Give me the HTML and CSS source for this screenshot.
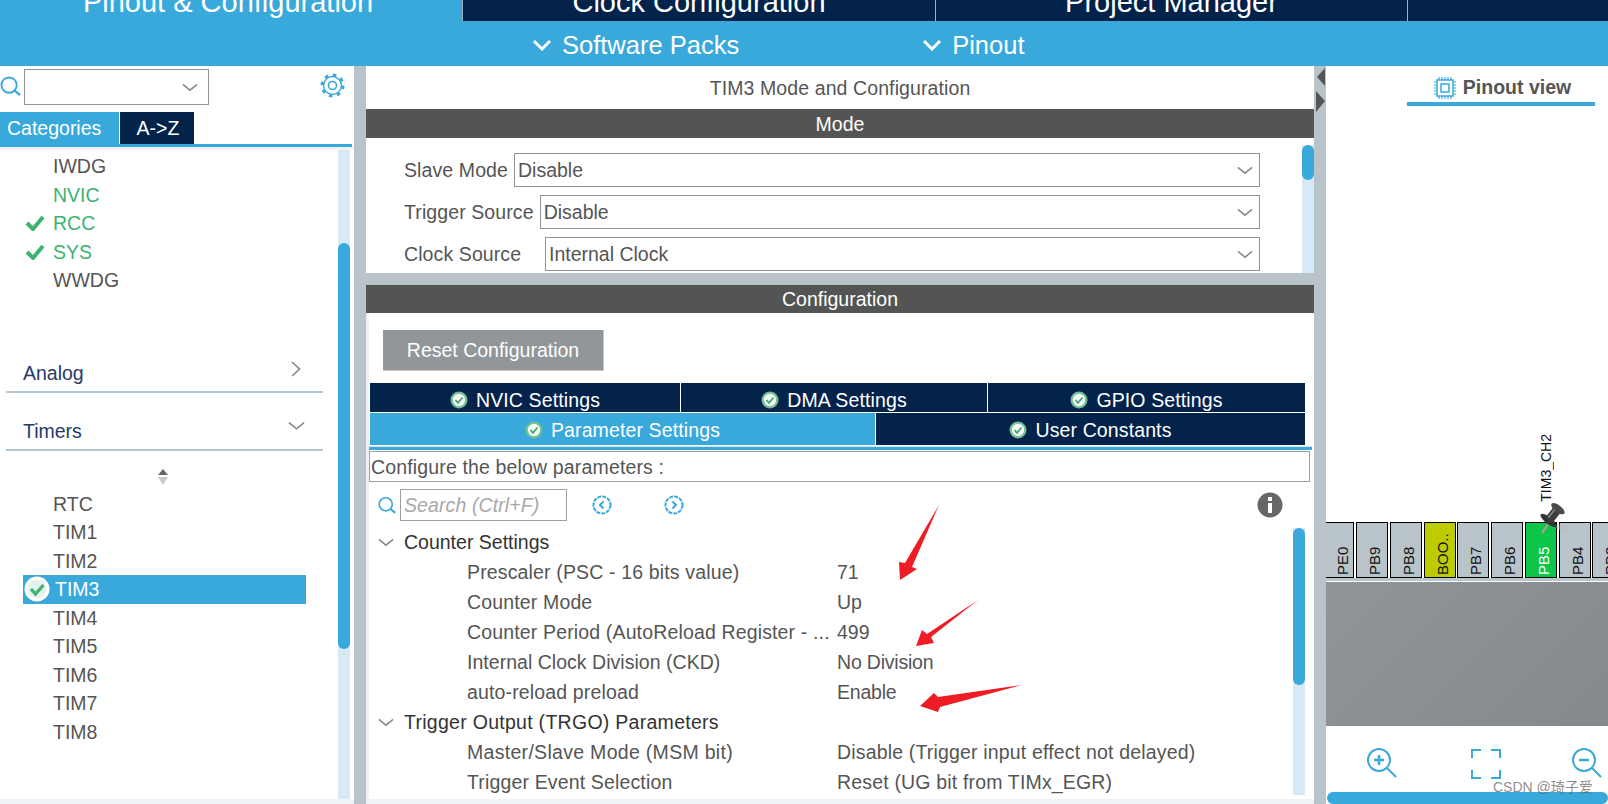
FILE: index.html
```html
<!DOCTYPE html>
<html lang="en">
<head>
    <meta charset="UTF-8">
    <title>STM32CubeMX - TIM3 Mode and Configuration</title>
    <link rel="stylesheet" href="styles.css">
</head>
<body>
    <!-- Shared icons -->
    <svg class="defs" width="0" height="0">
        <symbol id="chev" viewBox="0 0 18 10"><path d="M1 1.500 9 8 17 1.500" fill="none" stroke="#85898c" stroke-width="1.700"/></symbol>
        <symbol id="ok" viewBox="0 0 26 26"><circle cx="13" cy="13" r="12.500" fill="#fff"/><circle cx="13" cy="13" r="9.500" fill="#e6f3ec"/><path d="M7 13l4.500 5L19.500 9" fill="none" stroke="#3cb371" stroke-width="3.200"/></symbol>
        <symbol id="ok-tab" viewBox="0 0 18 18"><circle cx="9" cy="9" r="8.500" fill="#6fbf91"/><circle cx="9" cy="9" r="6.200" fill="#f3f9f5"/><path d="M5.500 9l2.500 2.800L12.500 6.500" fill="none" stroke="#45a870" stroke-width="1.800"/></symbol>
        <symbol id="tick" viewBox="0 0 20 16"><path d="M2 8l6 6L18 2" fill="none" stroke="#3cb371" stroke-width="4"/></symbol>
        <symbol id="lens" viewBox="0 0 22 22"><circle cx="9.500" cy="9.500" r="8" fill="none" stroke="#39a9dc" stroke-width="2"/><path d="M15 15l6 5" stroke="#39a9dc" stroke-width="2.500"/></symbol>
    </svg>

    <!-- Top navigation -->
    <nav class="main-tabs">
        <div class="main-tab active" style="width:463px">Pinout &amp; Configuration</div>
        <div class="main-tab" style="width:473px">Clock Configuration</div>
        <div class="main-tab" style="width:472px">Project Manager</div>
        <div class="main-tab" style="flex:1"></div>
    </nav>
    <div class="sub-menu">
        <div class="sub-item packs"><svg width="18" height="12" viewBox="0 0 18 12"><path d="M1 2l8 8 8-8" fill="none" stroke="#fff" stroke-width="3"/></svg>Software Packs</div>
        <div class="sub-item"><svg width="18" height="12" viewBox="0 0 18 12"><path d="M1 2l8 8 8-8" fill="none" stroke="#fff" stroke-width="3"/></svg>Pinout</div>
    </div>

    <main class="workspace">
        <!-- Left: categories -->
        <aside class="side-panel">
            <div class="side-search">
                <svg class="side-lens" width="21" height="21"><use href="#lens"/></svg>
                <div class="combo"><svg width="16" height="9"><use href="#chev"/></svg></div>
                <svg class="gear" width="25" height="25" viewBox="0 0 25 25">
                    <circle cx="12.500" cy="12.500" r="9" fill="none" stroke="#39a9dc" stroke-width="1.400"/>
                    <circle cx="12.500" cy="12.500" r="10.500" fill="none" stroke="#39a9dc" stroke-width="3" stroke-dasharray="3.500 4.750"/>
                    <circle cx="12.500" cy="12.500" r="4" fill="none" stroke="#39a9dc" stroke-width="1.600"/>
                </svg>
            </div>
            <div class="cat-tabs">
                <div class="cat-tab active">Categories</div>
                <div class="cat-tab">A-&gt;Z</div>
            </div>
            <div class="side-body">
                <div class="side-list">
                    <div class="items first">
                        <div class="item">IWDG</div>
                        <div class="item ok">NVIC</div>
                        <div class="item ok"><svg width="20" height="16"><use href="#tick"/></svg>RCC</div>
                        <div class="item ok"><svg width="20" height="16"><use href="#tick"/></svg>SYS</div>
                        <div class="item">WWDG</div>
                    </div>
                    <div class="group analog">Analog<svg class="chev-right" width="10" height="16" viewBox="0 0 10 16"><path d="M1 1l7.500 7L1 15" fill="none" stroke="#85898c" stroke-width="1.700"/></svg></div>
                    <div class="group timers">Timers<svg width="17" height="10"><use href="#chev"/></svg></div>
                    <div class="sorter">
                        <svg width="14" height="18" viewBox="0 0 14 18"><path d="M7 1l5 6H2z" fill="#666"/><path d="M2 9h10l-5 8z" fill="#c9c9c9"/></svg>
                    </div>
                    <div class="items">
                        <div class="item">RTC</div>
                        <div class="item">TIM1</div>
                        <div class="item">TIM2</div>
                        <div class="item selected"><svg width="26" height="26"><use href="#ok"/></svg>TIM3</div>
                        <div class="item">TIM4</div>
                        <div class="item">TIM5</div>
                        <div class="item">TIM6</div>
                        <div class="item">TIM7</div>
                        <div class="item">TIM8</div>
                    </div>
                </div>
                <div class="scroll-track side-scroll"><div class="scroll-thumb"></div></div>
            </div>
        </aside>

        <!-- Middle: mode and configuration -->
        <section class="center-panel">
            <h1 class="panel-title">TIM3 Mode and Configuration</h1>
            <div class="dark-bar">Mode</div>
            <div class="mode-body">
                <div class="mode-rows">
                    <div class="mode-row"><label class="mode-label">Slave Mode</label><div class="select">Disable<svg width="16" height="9"><use href="#chev"/></svg></div></div>
                    <div class="mode-row"><label class="mode-label">Trigger Source</label><div class="select">Disable<svg width="16" height="9"><use href="#chev"/></svg></div></div>
                    <div class="mode-row"><label class="mode-label clock">Clock Source</label><div class="select">Internal Clock<svg width="16" height="9"><use href="#chev"/></svg></div></div>
                </div>
                <div class="scroll-track mode-scroll"><div class="scroll-thumb"></div></div>
            </div>
            <div class="dark-bar config-bar">Configuration</div>
            <div class="config-body">
                <button class="reset-btn">Reset Configuration</button>
                <div class="settings-tabs">
                    <div class="set-row top">
                        <div class="set-tab" style="width:310px"><svg width="18" height="18"><use href="#ok-tab"/></svg>NVIC Settings</div>
                        <div class="set-tab" style="width:306px"><svg width="18" height="18"><use href="#ok-tab"/></svg>DMA Settings</div>
                        <div class="set-tab" style="width:317px"><svg width="18" height="18"><use href="#ok-tab"/></svg>GPIO Settings</div>
                    </div>
                    <div class="set-row bottom">
                        <div class="set-tab active" style="width:505px"><svg width="18" height="18"><use href="#ok-tab"/></svg>Parameter Settings</div>
                        <div class="set-tab" style="width:429px"><svg width="18" height="18"><use href="#ok-tab"/></svg>User Constants</div>
                    </div>
                </div>
                <div class="tabs-rule"></div>
                <div class="hint-box">Configure the below parameters :</div>
                <div class="param-search">
                    <svg width="18" height="19"><use href="#lens"/></svg>
                    <div class="search-input">Search (Ctrl+F)</div>
                    <svg class="nav-prev" width="20" height="20" viewBox="0 0 20 20"><circle cx="10" cy="10" r="8.500" fill="none" stroke="#39a9dc" stroke-width="2" stroke-dasharray="4 1"/><path d="M11.500 6.500 8 10l3.500 3.500" fill="none" stroke="#39a9dc" stroke-width="2"/></svg>
                    <svg class="nav-next" width="20" height="20" viewBox="0 0 20 20"><circle cx="10" cy="10" r="8.500" fill="none" stroke="#39a9dc" stroke-width="2" stroke-dasharray="4 1"/><path d="M8.500 6.500 12 10l-3.500 3.500" fill="none" stroke="#39a9dc" stroke-width="2"/></svg>
                    <svg class="info" width="26" height="26" viewBox="0 0 26 26"><circle cx="13" cy="13" r="12.500" fill="#666"/><rect x="11" y="5" width="4" height="4" fill="#fff"/><rect x="11" y="11" width="4" height="10" fill="#fff"/></svg>
                </div>
                <div class="tree-wrap">
                    <div class="tree">
                        <div class="tree-group"><svg width="16" height="9"><use href="#chev"/></svg>Counter Settings</div>
                        <div class="tree-row"><span class="tree-key">Prescaler (PSC - 16 bits value)</span><span>71</span></div>
                        <div class="tree-row"><span class="tree-key">Counter Mode</span><span>Up</span></div>
                        <div class="tree-row"><span class="tree-key">Counter Period (AutoReload Register - ...</span><span>499</span></div>
                        <div class="tree-row"><span class="tree-key tight">Internal Clock Division (CKD)</span><span class="tree-short">No Division</span></div>
                        <div class="tree-row"><span class="tree-key">auto-reload preload</span><span class="tree-short">Enable</span></div>
                        <div class="tree-group wide"><svg width="16" height="9"><use href="#chev"/></svg>Trigger Output (TRGO) Parameters</div>
                        <div class="tree-row"><span class="tree-key wide">Master/Slave Mode (MSM bit)</span><span class="tree-long">Disable (Trigger input effect not delayed)</span></div>
                        <div class="tree-row"><span class="tree-key">Trigger Event Selection</span><span class="tree-long">Reset (UG bit from TIMx_EGR)</span></div>
                    </div>
                    <div class="scroll-track tree-scroll"><div class="scroll-thumb"></div></div>
                </div>
            </div>
            <div class="strip"></div>
        </section>

        <!-- Collapse handles between panels -->
        <div class="divider">
            <svg width="10" height="45" viewBox="0 0 10 45"><path d="M9 0v18L1 9z" fill="#555"/><path d="M0 23l9 10-9 11z" fill="#555"/></svg>
        </div>

        <!-- Right: pinout -->
        <section class="pinout-panel">
            <div class="view-tabs">
                <div class="view-tab">
                    <svg width="22" height="22" viewBox="0 0 22 22">
                        <rect x="3" y="3" width="16" height="16" fill="none" stroke="#39a9dc" stroke-width="1.500"/>
                        <rect x="7" y="7" width="8" height="8" fill="none" stroke="#39a9dc" stroke-width="1.500"/>
                        <path d="M5 0v3M8 0v3M11 0v3M14 0v3M17 0v3M5 19v3M8 19v3M11 19v3M14 19v3M17 19v3M0 5h3M0 8h3M0 11h3M0 14h3M0 17h3M19 5h3M19 8h3M19 11h3M19 14h3M19 17h3" stroke="#39a9dc" stroke-width="1.200"/>
                    </svg>
                    Pinout view
                </div>
            </div>
            <div class="pin-canvas">
                <div class="pin-signal">TIM3_CH2</div>
                <svg class="pushpin" width="32" height="34" viewBox="0 0 32 34">
                    <ellipse cx="22" cy="25" rx="6" ry="3" fill="#bbb" opacity=".45"/>
                    <path d="M2 31 9 21" stroke="#a0a0a0" stroke-width="2.200"/>
                    <g transform="rotate(38 13 13)">
                        <ellipse cx="13" cy="20" rx="10" ry="3.500" fill="#333"/>
                        <rect x="8.500" y="6" width="9" height="14" fill="#3c3c3c"/>
                        <ellipse cx="13" cy="5" rx="8" ry="3.500" fill="#4a4a4a"/>
                        <path d="M11 8v10" stroke="#8a8a8a" stroke-width="1.500"/>
                    </g>
                </svg>
            </div>
            <div class="pins">
                <div class="pin first"><span>PE0</span></div>
                <div class="pin"><span>PB9</span></div>
                <div class="pin"><span>PB8</span></div>
                <div class="pin boot"><span>BOO..</span></div>
                <div class="pin tight"><span>PB7</span></div>
                <div class="pin"><span>PB6</span></div>
                <div class="pin on"><span>PB5</span></div>
                <div class="pin"><span>PB4</span></div>
                <div class="pin tight"><span>PB3</span></div>
            </div>
            <div class="pins-rail"></div>
            <div class="chip-body"></div>
            <div class="zoom-bar">
                <svg width="32" height="32" viewBox="0 0 32 32"><circle cx="13" cy="13" r="11" fill="none" stroke="#39a9dc" stroke-width="2"/><path d="M13 8v10M8 13h10" stroke="#39a9dc" stroke-width="2.500"/><path d="M21 21l9 9" stroke="#39a9dc" stroke-width="2"/></svg>
                <svg class="fit" width="30" height="30" viewBox="0 0 30 30"><path d="M1 9V1h9M20 1h9v8M29 21v8h-9M10 29H1v-8" fill="none" stroke="#39a9dc" stroke-width="2"/></svg>
                <svg class="zoom-out" width="32" height="32" viewBox="0 0 32 32"><circle cx="13" cy="13" r="11" fill="none" stroke="#39a9dc" stroke-width="2"/><path d="M8 13h10" stroke="#39a9dc" stroke-width="2.500"/><path d="M21 21l9 9" stroke="#39a9dc" stroke-width="2"/></svg>
            </div>
            <div class="pinout-scroll"></div>
        </section>
    </main>

    <!-- Red annotations drawn over the screenshot -->
    <svg class="marks" width="1608" height="804" viewBox="0 0 1608 804">
        <path d="M939 505 912 567 917 569 900 580 899 562 905 563z" fill="#ee1c25"/>
        <path d="M978 600 931 637 934 643 916 646 922 630 927 634z" fill="#ee1c25"/>
        <path d="M1022 685 940 707 938 712 920 706 934 693 938 697z" fill="#ee1c25"/>
    </svg>
    <div class="watermark">CSDN @琦子爱</div>
</body>
</html>
```

FILE: styles.css
```css
/* General Styles */
* {
    box-sizing: border-box;
}

body {
    margin: 0;
    width: 1608px;
    height: 804px;
    overflow: hidden;
    position: relative;
    font-family: "Liberation Sans", Arial, sans-serif;
    font-size: 19.5px;
    color: #555;
    background-color: #fff;
}

.defs {
    position: absolute;
}

svg {
    display: block;
    flex-shrink: 0;
}

/* Top navigation */
.main-tabs {
    display: flex;
    height: 21px;
    background-color: #03234b;
}

.main-tab {
    overflow: hidden;
    font-size: 29px;
    line-height: 4px;
    text-align: center;
    color: #fff;
    border-right: 1px solid #9fb0c0;
}

.main-tab.active {
    padding-right: 6px;
    background-color: #39a9dc;
}

.main-tab:last-child {
    border-right: 0;
}

.sub-menu {
    display: flex;
    align-items: center;
    height: 45px;
    padding: 3px 0 0 533px;
    font-size: 25.5px;
    color: #fff;
    background-color: #39a9dc;
}

.sub-item {
    display: flex;
    align-items: center;
    gap: 11px;
}

.sub-item.packs {
    margin-right: 184px;
}

/* Page columns */
.workspace {
    display: flex;
    height: 738px;
}

/* Left panel */
.side-panel {
    width: 366px;
    height: 738px;
    padding-right: 12px;
    border-right: 12px solid #b9c4ca;
    background-color: #fff;
    display: flex;
    flex-direction: column;
}

.side-search {
    display: flex;
    align-items: flex-start;
    height: 46px;
    padding-top: 3px;
}

.side-lens {
    margin: 7px 3px 0 0;
}

.combo {
    display: flex;
    align-items: center;
    justify-content: flex-end;
    flex-shrink: 0;
    width: 185px;
    height: 36px;
    padding-right: 10px;
    border: 1px solid #8f9498;
}

.gear {
    margin: 4px 0 0 111px;
}

.cat-tabs {
    display: flex;
    height: 35px;
    width: 352px;
    border-bottom: 3px solid #39a9dc;
}

.cat-tab {
    width: 74px;
    margin-left: 1px;
    padding: 5px 0 0 2px;
    color: #fff;
    text-align: center;
    background-color: #03234b;
}

.cat-tab.active {
    width: 119px;
    margin-left: 0;
    padding-left: 7px;
    text-align: left;
    background-color: #39a9dc;
}

.side-body {
    display: flex;
    flex: 1;
    width: 354px;
    min-height: 0;
    border-top: 3px solid #f0f3f5;
    border-bottom: 5px solid #f0f3f5;
}

.side-list {
    width: 338px;
    overflow: hidden;
}

.items.first {
    padding-top: 2px;
}

.item {
    position: relative;
    height: 28.5px;
    margin-left: 23px;
    width: 283px;
    padding-left: 30px;
    line-height: 28.5px;
}

.item svg {
    position: absolute;
    left: 2px;
    top: 6px;
}

.item.ok {
    color: #3cb371;
}

.item.selected {
    padding-left: 32px;
    color: #fff;
    background-color: #39a9dc;
}

.item.selected svg {
    left: 1px;
    top: 1px;
}

.group {
    display: flex;
    align-items: center;
    justify-content: space-between;
    width: 317px;
    height: 40px;
    margin-left: 6px;
    padding: 4px 10px 0 17px;
    color: #263a6b;
    border-bottom: 2px solid #b7c6d3;
}

.group.analog {
    margin-top: 58px;
}

.group.analog .chev-right {
    margin: -9px 12px 0 0;
}

.group.timers {
    margin-top: 18px;
    padding-right: 18px;
}

.group.timers svg {
    margin-top: -11px;
}

.sorter {
    display: flex;
    justify-content: center;
    width: 326px;
    height: 39px;
    padding-top: 17px;
}

/* Scroll bars */
.scroll-track {
    width: 12px;
    background-color: #d9e8f5;
}

.scroll-thumb {
    background-color: #39a9dc;
    border-radius: 6px;
}

.side-scroll .scroll-thumb {
    height: 406px;
    margin-top: 93px;
}

/* Middle panel */
.center-panel {
    display: flex;
    flex-direction: column;
    width: 950px;
    height: 738px;
    background-color: #b9c4ca;
}

.panel-title {
    height: 43px;
    margin: 0;
    font-size: 19.5px;
    font-weight: normal;
    line-height: 44px;
    letter-spacing: 0.1px;
    text-align: center;
}

.dark-bar {
    height: 29px;
    width: 948px;
    line-height: 30px;
    text-align: center;
    color: #fff;
    background-color: #535554;
}

.mode-body {
    display: flex;
    height: 135px;
}

.mode-rows {
    width: 936px;
    padding: 15px 0 0 38px;
}

.mode-row {
    display: flex;
    align-items: center;
    height: 34px;
    margin-bottom: 8px;
}

.mode-label {
    padding-right: 6px;
    letter-spacing: 0.1px;
}

.mode-label.clock {
    width: 141px;
}

.select {
    display: flex;
    align-items: center;
    justify-content: space-between;
    flex: 1;
    height: 34px;
    margin-right: 42px;
    padding: 0 6px 0 3px;
    border: 1px solid #8f9498;
}

.mode-scroll {
    margin-top: 7px;
}

.mode-scroll .scroll-thumb {
    height: 35px;
}

.config-bar {
    margin-top: 12px;
    height: 28px;
    line-height: 29px;
}

.mode-body,
.panel-title,
.config-body {
    width: 948px;
    background-color: #fff;
}

.config-body {
    flex: 1;
    min-height: 0;
    padding-top: 17px;
    overflow: hidden;
    border-left: 3px solid #f0f3f5;
}

.reset-btn {
    display: block;
    width: 221px;
    height: 41px;
    margin: 0 0 12px 14px;
    padding: 0;
    font: inherit;
    color: #fff;
    background-color: #91969a;
    border: 0;
    border-right: 1px solid #c4c8cb;
    border-bottom: 1px solid #c4c8cb;
}

.settings-tabs {
    margin-left: 1px;
    width: 935px;
}

.set-row {
    display: flex;
    gap: 1px;
}

.set-row.top {
    height: 29px;
    margin-bottom: 1px;
}

.set-row.bottom {
    height: 32px;
}

.set-tab {
    display: flex;
    align-items: center;
    justify-content: center;
    gap: 8px;
    letter-spacing: 0.12px;
    color: #fff;
    background-color: #03234b;
}

.set-row.top .set-tab {
    padding-top: 5px;
}

.set-row.bottom .set-tab {
    padding-top: 2px;
}

.set-tab.active {
    background-color: #39a9dc;
}

.tabs-rule {
    width: 945px;
    height: 4px;
    margin: 1px 0 1px -2px;
    border-top: 1px solid #cfe6f3;
    background-color: #39a9dc;
}

.hint-box {
    width: 941px;
    height: 31px;
    padding-left: 1px;
    line-height: 31px;
    letter-spacing: 0.15px;
    border: 1px solid #9aa0a4;
}

.param-search {
    display: flex;
    align-items: center;
    height: 32px;
    margin-top: 7px;
    padding-left: 9px;
}

.search-input {
    width: 167px;
    height: 32px;
    margin-left: 4px;
    padding-left: 3px;
    line-height: 30px;
    font-style: italic;
    letter-spacing: 0.1px;
    color: #a8a8a8;
    border: 1px solid #9aa0a4;
}

.nav-prev {
    margin-left: 25px;
}

.nav-next {
    margin-left: 52px;
}

.info {
    margin-left: 573px;
}

.tree-wrap {
    display: flex;
    margin-top: 7px;
    height: 271px;
}

.tree {
    width: 921px;
    margin-top: -1px;
    overflow: hidden;
}

.tree-group {
    display: flex;
    align-items: center;
    gap: 10px;
    height: 30px;
    padding-left: 9px;
    color: #333;
}

.tree-group.wide {
    letter-spacing: 0.28px;
}

.tree-row {
    display: flex;
    height: 30px;
    line-height: 30px;
    padding-left: 98px;
}

.tree-key {
    width: 370px;
    letter-spacing: 0.15px;
}

.tree-key.wide {
    letter-spacing: 0.3px;
}

.tree-key.tight {
    letter-spacing: 0.03px;
}

.tree-long {
    letter-spacing: 0.17px;
}

.tree-short {
    letter-spacing: -0.2px;
}

.tree-scroll .scroll-thumb {
    height: 157px;
}

.tree-scroll {
    margin-left: 3px;
    height: 267px;
}

.strip {
    width: 948px;
    height: 5px;
    background-color: #f0f3f5;
}

/* Handles between panels */
.divider {
    width: 10px;
    height: 738px;
    padding-top: 2px;
    background-color: #b9c4ca;
}

/* Right panel */
.pinout-panel {
    display: flex;
    flex-direction: column;
    flex: 1;
    min-width: 0;
    overflow: hidden;
}

.view-tabs {
    display: flex;
    justify-content: flex-end;
    height: 40px;
    padding-right: 13px;
}

.view-tab {
    display: flex;
    align-items: center;
    justify-content: center;
    gap: 7px;
    width: 188px;
    height: 40px;
    padding: 7px 0 0 3px;
    font-weight: bold;
    border-bottom: 4px solid #39a9dc;
}

.pin-canvas {
    position: relative;
    height: 416px;
}

.pin-signal {
    position: absolute;
    left: 214px;
    top: 328px;
    font-size: 14px;
    line-height: 12px;
    color: #111;
    writing-mode: vertical-rl;
    transform: rotate(180deg);
}

.pushpin {
    position: absolute;
    left: 214px;
    top: 396px;
    z-index: 2;
}

.pins {
    display: flex;
    gap: 2px;
    height: 56px;
}

.pin {
    display: flex;
    align-items: flex-start;
    justify-content: center;
    flex-shrink: 0;
    width: 32px;
    padding: 0 0 2px 6px;
    font-size: 15px;
    color: #111;
    background-color: #b9c4ca;
    border: 1px solid #000;
}

.pin span {
    height: 100%;
    text-align: left;
    line-height: 14px;
    writing-mode: vertical-rl;
    transform: rotate(180deg);
}

.pin.first {
    width: 28px;
    border-left: 0;
}

.pin.tight {
    margin-left: -1px;
}

.pin.boot {
    background-color: #bdcc00;
}

.pin.on {
    color: #fff;
    background-color: #0cc648;
}

.pins-rail {
    height: 4px;
    border-bottom: 1px solid #fff;
    background-color: #b9c4ca;
}

.chip-body {
    height: 144px;
    background: linear-gradient(135deg, #90959a, #84898c);
}

.zoom-bar {
    display: flex;
    align-items: flex-start;
    height: 66px;
    padding: 21px 0 0 40px;
}

.zoom-bar .fit {
    margin: 2px 0 0 73px;
}

.zoom-bar .zoom-out {
    margin-left: 70px;
}

.pinout-scroll {
    height: 12px;
    margin-left: 1px;
    background-color: #39a9dc;
    border-radius: 6px;
}

/* Overlays */
.marks {
    position: absolute;
    left: 0;
    top: 0;
    pointer-events: none;
}

.watermark {
    position: absolute;
    left: 1493px;
    top: 778px;
    font-family: "Liberation Sans", "Noto Sans CJK SC", sans-serif;
    font-size: 14px;
    line-height: 18px;
    color: rgba(90, 90, 90, 0.7);
}
```
